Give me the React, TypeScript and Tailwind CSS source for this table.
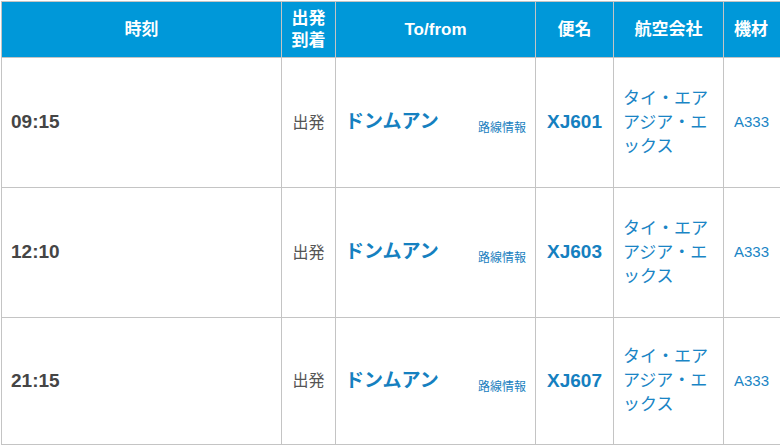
const flights = [
  { time: "09:15", no: "XJ601", h: "h-[130px]" },
  { time: "12:10", no: "XJ603", h: "h-[130px]" },
  { time: "21:15", no: "XJ607", h: "h-[127px]" },
];

export default function App() {
  return (
    <div className="w-[780px] h-[445px] overflow-hidden bg-white pl-px pt-px font-['Liberation_Sans','Noto_Sans_CJK_JP',sans-serif]">
      <table className="table-fixed border-collapse w-[781px]">
        <colgroup>
          <col className="w-[280px]" />
          <col className="w-[54px]" />
          <col className="w-[200px]" />
          <col className="w-[78px]" />
          <col className="w-[110px]" />
          <col className="w-[58px]" />
        </colgroup>
        <thead>
          <tr className="h-[56px] bg-[#0098d9] text-white font-bold text-[17px]">
            <th className="border border-[#c4c4c4] text-center">時刻</th>
            <th className="border border-[#c4c4c4] text-center leading-[22px]">
              出発
              <br />
              到着
            </th>
            <th className="border border-[#c4c4c4] text-center">To/from</th>
            <th className="border border-[#c4c4c4] text-center">便名</th>
            <th className="border border-[#c4c4c4] text-center">航空会社</th>
            <th className="border border-[#c4c4c4] text-left pl-[10px] whitespace-nowrap">機材</th>
          </tr>
        </thead>
        <tbody>
          {flights.map((f) => (
            <tr key={f.no} className={f.h}>
              <td className="border border-[#c4c4c4] pl-[9px] text-[19px] font-bold text-[#454545]">{f.time}</td>
              <td className="border border-[#c4c4c4] text-center text-[16px] text-[#555]">出発</td>
              <td className="border border-[#c4c4c4] pl-[9px] pr-[9px]">
                <div className="flex items-baseline justify-between">
                  <span className="text-[19px] font-bold text-[#1580c0]">ドンムアン</span>
                  <a className="text-[12px] text-[#1a7fc0] translate-y-[4px]">路線情報</a>
                </div>
              </td>
              <td className="border border-[#c4c4c4] text-center text-[19px] font-bold text-[#1580c0]">{f.no}</td>
              <td className="border border-[#c4c4c4] pl-[9px] pr-[10px] text-[17px] leading-[24px] text-[#1a85c5]">
                タイ・エアアジア・エックス
              </td>
              <td className="border border-[#c4c4c4] pl-[10px] text-[15px] text-[#1a85c5]">A333</td>
            </tr>
          ))}
        </tbody>
      </table>
    </div>
  );
}
